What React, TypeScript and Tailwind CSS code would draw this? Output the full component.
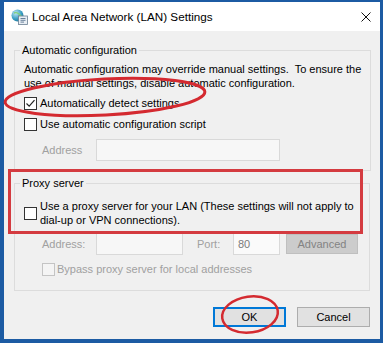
import React from 'react';

const Box: React.FC<{ checked?: boolean; disabled?: boolean }> = ({ checked, disabled }) => (
  <span
    className={`w-[13px] h-[13px] shrink-0 flex items-center justify-center border ${
      disabled ? 'border-[#c4c4c4] bg-[#f4f4f4]' : 'border-[#333333] bg-white'
    }`}
  >
    {checked && (
      <svg width="11" height="11" viewBox="0 0 11 11">
        <path d="M1.5 5.5 L4.2 8.2 L9.5 2.2" fill="none" stroke="#222" strokeWidth="1.2" />
      </svg>
    )}
  </span>
);

const TitleIcon = () => (
  <svg width="17" height="16" viewBox="0 0 17 16">
    <defs>
      <radialGradient id="g" cx="0.35" cy="0.3" r="0.8">
        <stop offset="0" stopColor="#bfe6f2" />
        <stop offset="0.6" stopColor="#3a9fc4" />
        <stop offset="1" stopColor="#1d6f93" />
      </radialGradient>
    </defs>
    <circle cx="6.5" cy="6.5" r="6" fill="url(#g)" />
    <path d="M3 4 Q6 3 8 5 T11 8" fill="none" stroke="#7ed07a" strokeWidth="1.4" />
    <rect x="7.5" y="7" width="9" height="8.5" fill="#e8eef4" stroke="#6a7e93" strokeWidth="0.8" />
    <path d="M9.5 9.5 H14.5 M9.5 11.3 H14.5 M9.5 13.1 H13" stroke="#5b7591" strokeWidth="0.9" />
  </svg>
);

export default function App() {
  return (
    <div className="relative w-[383px] h-[343px] bg-[#1c5ba3] pt-[2px] pl-[4px] pr-[3px] pb-[4px] font-['Liberation_Sans',Arial,sans-serif] text-[11px] text-black overflow-hidden">
      <div className="h-full flex flex-col bg-[#f0f0f0]">
        <div className="h-[29px] shrink-0 bg-white flex items-center pl-[7px]">
          <TitleIcon />
          <span className="ml-[4px] text-[11.7px] leading-none">Local Area Network (LAN) Settings</span>
          <svg className="ml-auto mr-[9px]" width="10" height="10" viewBox="0 0 10 10">
            <path d="M0.5 0.5 L9.5 9.5 M9.5 0.5 L0.5 9.5" stroke="#111" strokeWidth="1" />
          </svg>
        </div>

        <div className="flex flex-col px-[10px] pt-[11px]">
          <fieldset className="border border-[#dcdcdc] px-[9px] pb-[9px]">
            <legend className="-ml-[4px] px-[2px] leading-[16px]">Automatic configuration</legend>
            <p className="mt-[4px] leading-[14px] whitespace-nowrap">
              Automatic configuration may override manual settings.&nbsp; To ensure the
              <br />
              use of manual settings, disable automatic configuration.
            </p>
            <div className="mt-[3px] h-[21px] flex items-center gap-[3px]">
              <Box checked />
              <span>Automatically detect settings</span>
            </div>
            <div className="h-[21px] flex items-center gap-[3px]">
              <Box />
              <span>Use automatic configuration script</span>
            </div>
            <div className="mt-[4px] h-[22px] flex items-center pl-[18px]">
              <span className="w-[54px] text-[#a0a0a0]">Address</span>
              <div className="w-[184px] h-[22px] border border-[#d9d9d9] bg-[#f7f7f7]" />
            </div>
          </fieldset>

          <fieldset className="mt-[4px] border border-[#dcdcdc] px-[9px] pb-[11px]">
            <legend className="-ml-[4px] px-[2px] leading-[16px]">Proxy server</legend>
            <div className="mt-[8px] flex items-center gap-[3px]">
              <Box />
              <span className="leading-[14px] whitespace-nowrap">
                Use a proxy server for your LAN (These settings will not apply to
                <br />
                dial-up or VPN connections).
              </span>
            </div>
            <div className="mt-[6px] h-[22px] flex items-center pl-[18px] text-[#a0a0a0]">
              <span className="w-[54px]">Address:</span>
              <div className="w-[87px] h-[22px] border border-[#d9d9d9] bg-[#f7f7f7]" />
              <span className="ml-[14px] w-[36px]">Port:</span>
              <div className="w-[47px] h-[22px] border border-[#d9d9d9] bg-[#fafafa] flex items-center pl-[4px] text-[#7a7a7a]">
                80
              </div>
              <div className="ml-[6px] w-[72px] h-[20px] border border-[#bfbfbf] bg-[#cccccc] flex items-center justify-center text-[#838383]">
                Advanced
              </div>
            </div>
            <div className="mt-[4px] h-[20px] flex items-center gap-[2px] pl-[18px] text-[#a0a0a0]">
              <Box disabled />
              <span>Bypass proxy server for local addresses</span>
            </div>
          </fieldset>

          <div className="mt-[16px] flex justify-end gap-[11px]">
            <div className="w-[73px] h-[20px] border-2 border-[#0078d7] bg-[#e1e1e1] flex items-center justify-center">OK</div>
            <div className="w-[73px] h-[20px] border border-[#adadad] bg-[#e1e1e1] flex items-center justify-center">Cancel</div>
          </div>
        </div>
      </div>

      <svg className="absolute inset-0 pointer-events-none" width="383" height="343" viewBox="0 0 383 343">
        <ellipse cx="105" cy="97" rx="100" ry="18" transform="rotate(-3 105 97)" fill="none" stroke="#d42a30" strokeWidth="3" />
        <rect x="9.5" y="170.5" width="352" height="62" fill="none" stroke="#d43b40" strokeWidth="3" />
        <ellipse cx="250" cy="314.5" rx="28" ry="18" transform="rotate(-8 250 314.5)" fill="none" stroke="#d42a30" strokeWidth="2.5" />
      </svg>
    </div>
  );
}
